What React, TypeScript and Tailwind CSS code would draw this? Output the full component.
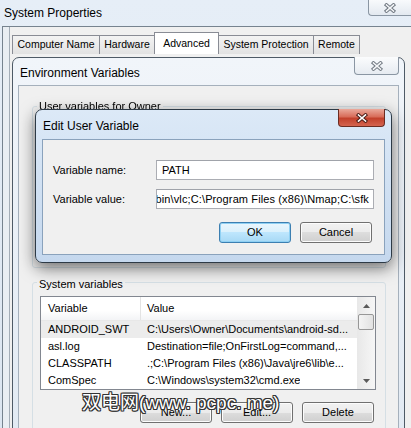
import React from "react";

const CloseGlyph = ({ outline, fill }: { outline: string; fill: string }) => (
  <svg width="14" height="10" viewBox="0 0 14 10">
    <path d="M3.5 2 10.5 8M10.5 2 3.5 8" stroke={outline} strokeWidth="3.6" strokeLinecap="square" fill="none" />
    <path d="M3.5 2 10.5 8M10.5 2 3.5 8" stroke={fill} strokeWidth="1.6" strokeLinecap="square" fill="none" />
  </svg>
);

const Arrow = ({ up }: { up?: boolean }) => (
  <svg width="7" height="4" viewBox="0 0 7 4">
    <path d={up ? "M0 4 3.5 0 7 4Z" : "M0 0 3.5 4 7 0Z"} fill="#5a5a5a" />
  </svg>
);

const tabs = [
  { label: "Computer Name", cls: "w-[88px]" },
  { label: "Hardware", cls: "w-[56px]" },
  { label: "Advanced", cls: "w-[65px]", active: true },
  { label: "System Protection", cls: "w-[96px]" },
  { label: "Remote", cls: "w-[47px]" },
];

const rows = [
  ["ANDROID_SWT", "C:\\Users\\Owner\\Documents\\android-sd..."],
  ["asl.log", "Destination=file;OnFirstLog=command,..."],
  ["CLASSPATH", ".;C:\\Program Files (x86)\\Java\\jre6\\lib\\e..."],
  ["ComSpec", "C:\\Windows\\system32\\cmd.exe"],
];

const Button = ({ label, primary }: { label: string; primary?: boolean }) => (
  <div
    className={
      primary
        ? "w-[72px] h-[21px] flex items-center justify-center rounded-[3px] border border-[#3c7fb1] bg-[linear-gradient(#eaf6fd,#d9f0fc_50%,#bee6fd_50%,#a7d9f5)] shadow-[inset_0_0_0_1px_#8fd0f3]"
        : "w-[72px] h-[21px] flex items-center justify-center rounded-[3px] border border-[#707070] bg-[linear-gradient(#f2f2f2,#ebebeb_50%,#dddddd_50%,#cfcfcf)] shadow-[inset_0_0_0_1px_#fcfcfc]"
    }
  >
    {label}
  </div>
);

export default function App() {
  return (
    <div className="relative w-[411px] h-[428px] overflow-hidden bg-[linear-gradient(180deg,#e6eef7,#dce6f1)] font-['Liberation_Sans',Arial,sans-serif] text-[11px] text-black">
      {/* System Properties title bar */}
      <div className="flex h-[26px] items-start">
        <div className="pl-[4px] pt-[4px] text-[12px]">System Properties</div>
        <div className="ml-auto w-[43px] h-[16px] flex items-center justify-center rounded-bl-[4px] border-l border-b border-[#8a96a3] bg-[linear-gradient(#f8fafc,#e3e9f0)]">
          <CloseGlyph outline="#6f7780" fill="#f4f6f8" />
        </div>
      </div>

      {/* System Properties body */}
      <div className="ml-[2px] h-[402px] border-l border-t border-[#76838f] bg-[#e9eef3] pl-[6px]">
        <div className="h-full border-l border-[#a3adb7] bg-[#f0f0f0]">
          <div className="flex items-end h-[27px] pl-[2px]">
            {tabs.map((t) =>
              t.active ? (
                <div
                  key={t.label}
                  className={`${t.cls} relative z-10 -ml-px h-[22px] flex items-center justify-center border border-b-0 border-[#898c95] bg-white text-[10.5px]`}
                >
                  {t.label}
                </div>
              ) : (
                <div
                  key={t.label}
                  className={`${t.cls} -ml-px first:ml-0 h-[19px] flex items-center justify-center border border-b-0 border-[#898c95] bg-[linear-gradient(#f3f3f3,#e2e2e2)] text-[10.5px]`}
                >
                  {t.label}
                </div>
              )
            )}
          </div>

          {/* Environment Variables window */}
          <div className="mt-[3px] ml-[2px] w-[393px] h-[380px] rounded-t-[7px] border border-[#4e5a66] bg-[linear-gradient(#f1f5fa,#e2eaf3)]">
            <div className="flex items-start h-[27px]">
              <div className="pl-[7px] pt-[6px] text-[12px]">Environment Variables</div>
              <div className="ml-auto mr-[5px] -mt-px w-[45px] h-[18px] flex items-center justify-center rounded-b-[4px] border border-t-0 border-[#8a96a3] bg-[linear-gradient(#fbfcfd,#e6ebf1)]">
                <CloseGlyph outline="#737b84" fill="#f6f7f9" />
              </div>
            </div>

            <div className="mx-[5px] h-[360px] border border-[#a5b0bc] bg-[#f0f0f0]">
              <div className="relative ml-[13px] mt-[20px] w-[354px] h-[162px] rounded-[3px] border border-[#d5dfe5]">
                <div className="absolute -top-[9px] left-[4px] px-[2px] bg-[#f0f0f0] blur-[0.6px]">User variables for Owner</div>
              </div>

              <div className="relative ml-[13px] mt-[14px] w-[354px] h-[200px] rounded-[3px] border border-[#d5dfe5]">
                <div className="absolute -top-[7px] left-[4px] px-[2px] bg-[#f0f0f0]">System variables</div>
                <div className="pl-[7px] pt-[13px]">
                  <div className="flex w-[336px] h-[94px] border border-[#828790] bg-white">
                    <div className="flex-1 flex flex-col overflow-hidden">
                      <div className="flex h-[24px] items-center bg-[linear-gradient(#ffffff,#ffffff_60%,#f3f4f6)] border-b border-[#e8e8e8]">
                        <div className="w-[100px] h-full flex items-center pl-[7px] border-r border-[#e3e3e3]">Variable</div>
                        <div className="pl-[6px]">Value</div>
                      </div>
                      {rows.map(([k, v], i) => (
                        <div key={k} className={i === 0 ? "flex h-[17px] items-center bg-[#ececec]" : "flex h-[17px] items-center"}>
                          <div className="w-[100px] pl-[7px] whitespace-nowrap">{k}</div>
                          <div className="pl-[6px] whitespace-nowrap overflow-hidden">{v}</div>
                        </div>
                      ))}
                    </div>
                    <div className="w-[18px] flex flex-col bg-[linear-gradient(90deg,#e8e8e8,#f6f6f6)]">
                      <div className="h-[17px] flex items-center justify-center">
                        <Arrow up />
                      </div>
                      <div className="mx-[1px] h-[16px] rounded-[2px] border border-[#979797] bg-[linear-gradient(90deg,#f4f4f4,#e2e2e2)]" />
                      <div className="flex-1" />
                      <div className="h-[17px] flex items-center justify-center">
                        <Arrow />
                      </div>
                    </div>
                  </div>
                  <div className="mt-[12px] flex justify-end gap-[9px] pr-[11px]">
                    <Button label="New..." />
                    <Button label="Edit..." />
                    <Button label="Delete" />
                  </div>
                </div>
              </div>
            </div>
          </div>
        </div>
      </div>

      {/* Edit User Variable dialog */}
      <div className="absolute left-[35px] top-[109px] w-[357px] h-[154px] flex flex-col rounded-[7px] border border-[#2d3a46] bg-[linear-gradient(#dce9f7,#c5d8ee)] shadow-[0_5px_16px_rgba(0,0,0,0.55)]">
        <div className="flex items-start h-[29px]">
          <div className="pl-[7px] pt-[7px] text-[12px]">Edit User Variable</div>
          <div className="ml-auto mr-[6px] -mt-px w-[47px] h-[18px] flex items-center justify-center rounded-b-[4px] border border-t-0 border-[#6b2c22] bg-[linear-gradient(#eaa99b,#d86d5a_45%,#c2412c_55%,#d4644f)]">
            <CloseGlyph outline="#4a1d17" fill="#ffffff" />
          </div>
        </div>
        <div className="mx-[6px] h-[116px] border border-[#8aa2bc] bg-[#f0f0f0] pt-[20px] pl-[10px] pr-[10px]">
          <div className="flex items-center h-[20px]">
            <div className="w-[103px]">Variable name:</div>
            <div className="flex-1 h-[20px] flex items-center pl-[5px] border border-[#abadb3] border-t-[#a0a3aa] bg-white">PATH</div>
          </div>
          <div className="flex items-center h-[20px] mt-[9px]">
            <div className="w-[103px]">Variable value:</div>
            <div className="flex-1 h-[20px] flex items-center justify-end pr-[4px] overflow-hidden whitespace-nowrap border border-[#abadb3] border-t-[#a0a3aa] bg-white">
              <span className="tracking-[0.12px]">bin\vlc;C:\Program Files (x86)\Nmap;C:\sfk</span>
              <span className="w-px h-[13px] bg-black" />
            </div>
          </div>
          <div className="mt-[13px] flex justify-end gap-[9px] pr-[2px]">
            <Button label="OK" primary />
            <Button label="Cancel" />
          </div>
        </div>
      </div>

      {/* watermark */}
      <div className="absolute left-[82px] top-[393px] text-[19px] leading-none whitespace-nowrap text-white font-['Liberation_Sans','Noto_Sans_CJK_SC',sans-serif] [text-shadow:1px_0_#333,-1px_0_#333,0_1px_#333,0_-1px_#333,1px_1px_#333,-1px_-1px_#333,1px_-1px_#333,-1px_1px_#333]">
        双电网(www. pcpc. me)
      </div>
    </div>
  );
}
